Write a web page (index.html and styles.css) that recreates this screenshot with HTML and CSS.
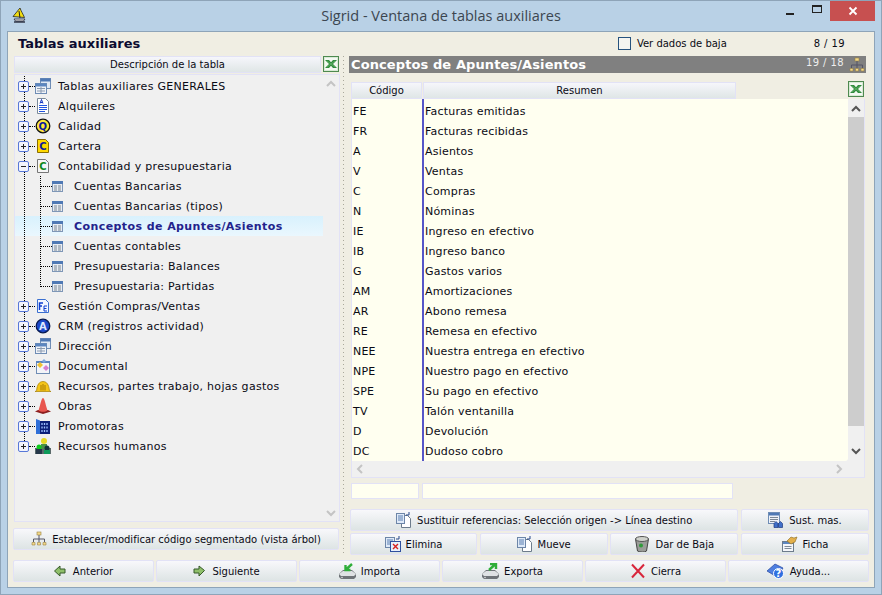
FILE: index.html
```html
<!DOCTYPE html>
<html lang="es">
<head>
<meta charset="utf-8">
<title>Sigrid - Ventana de tablas auxiliares</title>
<link rel="stylesheet" href="styles.css">
</head>
<body>
<svg class="defs" width="0" height="0" aria-hidden="true">
  <symbol id="i-excel" viewBox="0 0 16 16"><rect width="16" height="16" fill="#4e8a50"/><rect x="1" y="1" width="14" height="14" fill="#d9ead6"/><rect x="2" y="2" width="12" height="12" fill="#f4f9f2"/><path d="M2 4h4l2 2.200L10 4h4l-4 4 4 4h-4L8 9.800 6 12H2l4-4z" fill="#2f8a3c"/><path d="M4 5l8 6M12 5l-8 6" stroke="#6dbb70" stroke-width=".7"/></symbol>
  <symbol id="i-tables" viewBox="0 0 16 16"><rect x="5.500" y=".5" width="10" height="10" fill="#dfe8f4" stroke="#6f8db5"/><rect x="5.500" y=".5" width="10" height="3" fill="#4f79b5"/><rect x=".5" y="5.500" width="11" height="10" fill="#f0f3f8" stroke="#6f8db5"/><rect x=".5" y="5.500" width="11" height="3" fill="#5c86c0"/><path d="M2 10.500h8M2 13h8M6 9v6" stroke="#8a9ab0"/></symbol>
  <symbol id="i-docA" viewBox="0 0 16 16"><path d="M2.500.5h8l3 3v12h-11z" fill="#fff" stroke="#7a8a9a"/><path d="M5 5.500l1.500-4 1.500 4M5.500 4.500h2" stroke="#1033c0" fill="none"/><path d="M4 7.500h8M4 9.500h8M4 11.500h8M4 13.500h6" stroke="#2255e0"/></symbol>
  <symbol id="i-sub" viewBox="0 0 11 11"><rect x=".5" y=".5" width="10" height="10" fill="#e8ecf2" stroke="#7f97b7"/><rect x="0" y="0" width="11" height="3" fill="#4f79b5"/><path d="M2 5h3M6 5h3M2 7h3M6 7h3M2 9h3M6 9h3" stroke="#7b8794"/></symbol>
  <symbol id="i-fe" viewBox="0 0 16 16"><path d="M2.500 1.500h8l3 3v10h-11z" fill="#f4f8ff" stroke="#3a6fd0"/><path d="M4.500 12V5H8M4.500 8H7" stroke="#0f3fd0" stroke-width="1.500" fill="none"/><path d="M9 13V8h3M9 10.500h2.500M9 13h3" stroke="#0f3fd0" fill="none"/></symbol>
  <symbol id="i-doc" viewBox="0 0 16 16"><rect x="1.500" y="3.500" width="13" height="12" fill="#f2f4f8" stroke="#6f8db5"/><rect x="1" y="3" width="14" height="2" fill="#5c86c0"/><path d="M5 4l3 3-3 3-3-3z" fill="#f1c232"/><path d="M11 7l3 3-3 3-3-3z" fill="#d77fd0"/><path d="M9 1l2 2-2 2-2-2z" fill="#7aa7e0"/></symbol>
  <symbol id="i-helmet" viewBox="0 0 16 16"><path d="M0 13.500c.8-.3 1.200-.5 1.600-.8C2 6.500 4.500 3.500 8 3.500s6 3 6.400 9.200c.4.300.8.500 1.600.8z" fill="#f5c518" stroke="#a67f00" stroke-width=".7"/><path d="M6 7v5.500M8 6v6.500M10 7v5.500" stroke="#a87b00"/></symbol>
  <symbol id="i-cone" viewBox="0 0 16 16"><path d="M0 13.500l3-1.500h10l3 1.500-8 2.500z" fill="#8c1f1f"/><path d="M8 0c1.500 0 2.200 5 4.500 12.500-2.500 1.800-6.500 1.800-9 0C5.800 5 6.500 0 8 0z" fill="#e8554e"/></symbol>
  <symbol id="i-build" viewBox="0 0 16 16"><path d="M1 1l4 1.500V16H1z" fill="#2f6fd8"/><rect x="5" y="3" width="10" height="13" fill="#0b1f78"/><path d="M7 5v2M9.500 5v2M12 5v2M7 8.500v2M9.500 8.500v2M12 8.500v2M7 12v2M9.500 12v2M12 12v2" stroke="#9fc0ff" stroke-width="1.300"/></symbol>
  <symbol id="i-people" viewBox="0 0 16 16"><rect y="10" width="16" height="6" fill="#5a6a6a"/><circle cx="9" cy="3" r="3" fill="#e5d923"/><rect x="6" y="6" width="6" height="5" fill="#4a8f4a"/><circle cx="4" cy="9" r="2.500" fill="#0ecb1e"/><circle cx="12" cy="10" r="2.500" fill="#14303a"/><rect x="1" y="11" width="6" height="5" fill="#26384a"/><rect x="9" y="12" width="6" height="4" fill="#0e9a5a"/></symbol>
  <symbol id="i-tree" viewBox="0 0 16 16"><rect x="6" y="1" width="4" height="3" fill="#f3d98a" stroke="#9a8240" stroke-width=".6"/><path d="M8 4v4M2.500 11V8h11v3M8 8v3" stroke="#556" fill="none"/><path d="M1 11.500h3v2.500H1zM6.500 11.500h3v2.500h-3zM12 11.500h3v2.500h-3z" fill="#f3d98a" stroke="#9a8240" stroke-width=".6"/></symbol>
  <symbol id="i-left" viewBox="0 0 12 12"><path d="M6 1v3h5v4H6v3L.5 6z" fill="#8fc06a" stroke="#375a2a"/></symbol>
  <symbol id="i-right" viewBox="0 0 12 12"><path d="M6 1v3H1v4h5v3l5.500-5.500z" fill="#8fc06a" stroke="#375a2a"/></symbol>
  <symbol id="i-import" viewBox="0 0 17 16"><path d="M0 11l4-4h9l4 4v3l-2 2H2l-2-2z" fill="#6f7478"/><path d="M0 11l4-3h9l4 3-2 2H2z" fill="#dfe2e4"/><circle cx="3" cy="14.500" r=".8" fill="#ddd"/><path d="M13 1L7 6.500M6.500 2v5h5" stroke="#2fae3a" stroke-width="2.400" fill="none"/></symbol>
  <symbol id="i-export" viewBox="0 0 17 16"><path d="M0 11l4-4h9l4 4v3l-2 2H2l-2-2z" fill="#6f7478"/><path d="M0 11l4-3h9l4 3-2 2H2z" fill="#dfe2e4"/><circle cx="3" cy="14.500" r=".8" fill="#ddd"/><path d="M7 7l6-5.500M8 1h6v5" stroke="#2fae3a" stroke-width="2.400" fill="none"/></symbol>
  <symbol id="i-x" viewBox="0 0 16 16"><path d="M2 1.500l12 13M14 1.500l-12 13" stroke="#d8263c" stroke-width="2" fill="none"/></symbol>
  <symbol id="i-move" viewBox="0 0 16 16"><path d="M5.500 3.500h6l3 3v9h-9z" fill="#fff" stroke="#6d7c8c"/><rect x=".5" y="1.500" width="8" height="10" fill="#dfeaf8" stroke="#6d86a8"/><path d="M2 4h5M2 6h5M2 8h5" stroke="#5a7fb0"/><path d="M10 3h3V0" stroke="#27488a" fill="none"/></symbol>
  <symbol id="i-del" viewBox="0 0 16 16"><rect x=".5" y="1.500" width="9" height="10" fill="#dfeaf8" stroke="#6d86a8"/><path d="M2 4h6M2 6h6M2 8h6" stroke="#5a7fb0"/><rect x="5.500" y="5.500" width="10" height="10" fill="#e8f0fb" stroke="#3050a0"/><path d="M8 8l5 5M13 8l-5 5" stroke="#d82020" stroke-width="1.400"/><path d="M11 3h3V0" stroke="#27488a" fill="none"/></symbol>
  <symbol id="i-trash" viewBox="0 0 16 16"><path d="M1.500 3l2 12c3 1.500 7 1.500 9 0l2-12z" fill="#9a9c98" stroke="#444"/><ellipse cx="8" cy="3" rx="6.500" ry="2.500" fill="#d0d2cc" stroke="#555"/><circle cx="7" cy="9.500" r="2" fill="#2f9a3a"/></symbol>
  <symbol id="i-ficha" viewBox="0 0 16 16"><rect x=".5" y="5.500" width="11" height="10" fill="#f4f6fa" stroke="#6d7c8c"/><rect x="1" y="6" width="10" height="2" fill="#5c86c0"/><path d="M2.500 10.500h7M2.500 12.500h7" stroke="#7f8b99"/><path d="M5 5l4-4 3 1 3-1-2 5-4 2z" fill="#e3b04b" stroke="#8a6a20" stroke-width=".6"/></symbol>
  <symbol id="i-sust" viewBox="0 0 16 16"><rect x=".5" y=".5" width="11" height="11" fill="#eef2f8" stroke="#6f8db5"/><rect x="1" y="1" width="10" height="2.500" fill="#4f79b5"/><path d="M2 5.500h8M2 7.500h8M2 9.500h5" stroke="#7b8794"/><path d="M6 15.500v-4l2-2 2 2v4zM10.500 15.500v-4l2-2 2 2v4z" fill="#3f6fc8" stroke="#1c3a80" stroke-width=".7"/></symbol>
</svg>

<div class="window">
  <header class="titlebar">
    <svg class="appicon" width="15" height="16" viewBox="0 0 15 16"><path d="M1 9.500L8 1c1 3 3 6 4.500 9.500z" fill="#f2dd10" stroke="#222" stroke-width=".8"/><path d="M7 4l1 7" stroke="#222"/><path d="M2 12h11l-1.500 2h-8z" fill="#f4f4f4" stroke="#223" stroke-width=".8"/><path d="M2 15h11" stroke="#112" stroke-width="1.200"/></svg>
    <span class="title">Sigrid - Ventana de tablas auxiliares</span>
    <div class="controls">
      <span class="ctl ctl-min"><span class="min-bar"></span></span>
      <span class="ctl ctl-max"><span class="max-box"></span></span>
      <span class="ctl ctl-close"><svg width="10" height="10" viewBox="0 0 10 10"><path d="M1.500 1.500l7 7M8.500 1.500l-7 7" stroke="#fff" stroke-width="1.800"/></svg></span>
    </div>
  </header>

  <div class="content">
    <div class="toprow">
      <h1 class="heading">Tablas auxiliares</h1>
      <label class="check"><span class="box"></span>Ver dados de baja</label>
      <span class="counter">8 / 19</span>
    </div>

    <div class="main">
      <section class="left">
        <div class="headrow">
          <div class="colhead grow">Descripción de la tabla</div>
          <svg class="xls" width="16" height="16"><use href="#i-excel"/></svg>
        </div>
        <div class="tree">
          <div class="nodes">
            <div class="node"><span class="exp"></span><span class="twig"></span><svg class="nic" width="16" height="16"><use href="#i-tables"/></svg><span>Tablas auxiliares GENERALES</span></div>
            <div class="node"><span class="exp"></span><span class="twig"></span><svg class="nic" width="16" height="16"><use href="#i-docA"/></svg><span>Alquileres</span></div>
            <div class="node"><span class="exp"></span><span class="twig"></span><svg class="nic" width="16" height="16" viewBox="0 0 16 16"><circle cx="8" cy="8" r="6.800" fill="#fde93a" stroke="#111" stroke-width="1.300"/><text x="8" y="11.500" class="ic-t" fill="#0b1a9a">Q</text></svg><span>Calidad</span></div>
            <div class="node"><span class="exp"></span><span class="twig"></span><svg class="nic" width="16" height="16" viewBox="0 0 16 16"><path d="M2.500 1.500h8l3 3v10h-11z" fill="#ffd900" stroke="#8a6d00"/><text x="8" y="12" class="ic-t" fill="#10209a">C</text></svg><span>Cartera</span></div>
            <div class="node"><span class="exp exp-open"></span><span class="twig"></span><svg class="nic" width="16" height="16" viewBox="0 0 16 16"><path d="M2.500 1.500h8l3 3v10h-11z" fill="#f6f6f6" stroke="#777"/><text x="8" y="12" class="ic-t" fill="#0f8a1a">C</text></svg><span>Contabilidad y presupuestaria</span></div>
            <div class="node sub"><span class="twig-sub"></span><svg class="sic" width="11" height="11"><use href="#i-sub"/></svg><span>Cuentas Bancarias</span></div>
            <div class="node sub"><span class="twig-sub"></span><svg class="sic" width="11" height="11"><use href="#i-sub"/></svg><span>Cuentas Bancarias (tipos)</span></div>
            <div class="node sub selected"><span class="twig-sub"></span><svg class="sic" width="11" height="11"><use href="#i-sub"/></svg><span>Conceptos de Apuntes/Asientos</span></div>
            <div class="node sub"><span class="twig-sub"></span><svg class="sic" width="11" height="11"><use href="#i-sub"/></svg><span>Cuentas contables</span></div>
            <div class="node sub"><span class="twig-sub"></span><svg class="sic" width="11" height="11"><use href="#i-sub"/></svg><span>Presupuestaria: Balances</span></div>
            <div class="node sub sub-last"><span class="twig-sub"></span><svg class="sic" width="11" height="11"><use href="#i-sub"/></svg><span>Presupuestaria: Partidas</span></div>
            <div class="node"><span class="exp"></span><span class="twig"></span><svg class="nic" width="16" height="16"><use href="#i-fe"/></svg><span>Gestión Compras/Ventas</span></div>
            <div class="node"><span class="exp"></span><span class="twig"></span><svg class="nic" width="16" height="16" viewBox="0 0 16 16"><circle cx="8" cy="8" r="6.800" fill="#1c48c8" stroke="#081a50" stroke-width="1.300"/><text x="8" y="11.500" class="ic-t" fill="#dfe8ff">A</text></svg><span>CRM (registros actividad)</span></div>
            <div class="node"><span class="exp"></span><span class="twig"></span><svg class="nic" width="16" height="16"><use href="#i-tables"/></svg><span>Dirección</span></div>
            <div class="node"><span class="exp"></span><span class="twig"></span><svg class="nic" width="16" height="16"><use href="#i-doc"/></svg><span>Documental</span></div>
            <div class="node"><span class="exp"></span><span class="twig"></span><svg class="nic" width="16" height="16"><use href="#i-helmet"/></svg><span>Recursos, partes trabajo, hojas gastos</span></div>
            <div class="node"><span class="exp"></span><span class="twig"></span><svg class="nic" width="16" height="16"><use href="#i-cone"/></svg><span>Obras</span></div>
            <div class="node"><span class="exp"></span><span class="twig"></span><svg class="nic" width="16" height="16"><use href="#i-build"/></svg><span>Promotoras</span></div>
            <div class="node node-last"><span class="exp"></span><span class="twig"></span><svg class="nic" width="16" height="16"><use href="#i-people"/></svg><span>Recursos humanos</span></div>
          </div>
          <div class="vbar vbar-idle">
            <svg width="16" height="16" viewBox="0 0 16 16"><path d="M4 10l4-4 4 4" class="chev"/></svg>
            <svg width="16" height="16" viewBox="0 0 16 16"><path d="M4 6l4 4 4-4" class="chev"/></svg>
          </div>
        </div>
        <button class="btn seg"><svg width="16" height="16"><use href="#i-tree"/></svg>Establecer/modificar código segmentado (vista árbol)</button>
      </section>

      <div class="splitter"></div>

      <section class="right">
        <div class="panelbar">
          <span class="paneltitle">Conceptos de Apuntes/Asientos</span>
          <span class="panelcount">19 / 18</span>
          <svg width="16" height="16"><use href="#i-tree"/></svg>
        </div>
        <div class="headrow gridhead">
          <div class="colhead col-code">Código</div>
          <div class="colhead col-res">Resumen</div>
          <svg class="xls xls-right" width="16" height="16"><use href="#i-excel"/></svg>
        </div>
        <div class="grid">
          <div class="gridmain">
            <div class="rows">
              <div class="row"><span class="code">FE</span><span class="res">Facturas emitidas</span></div>
              <div class="row"><span class="code">FR</span><span class="res">Facturas recibidas</span></div>
              <div class="row"><span class="code">A</span><span class="res">Asientos</span></div>
              <div class="row"><span class="code">V</span><span class="res">Ventas</span></div>
              <div class="row"><span class="code">C</span><span class="res">Compras</span></div>
              <div class="row"><span class="code">N</span><span class="res">Nóminas</span></div>
              <div class="row"><span class="code">IE</span><span class="res">Ingreso en efectivo</span></div>
              <div class="row"><span class="code">IB</span><span class="res">Ingreso banco</span></div>
              <div class="row"><span class="code">G</span><span class="res">Gastos varios</span></div>
              <div class="row"><span class="code">AM</span><span class="res">Amortizaciones</span></div>
              <div class="row"><span class="code">AR</span><span class="res">Abono remesa</span></div>
              <div class="row"><span class="code">RE</span><span class="res">Remesa en efectivo</span></div>
              <div class="row"><span class="code">NEE</span><span class="res">Nuestra entrega en efectivo</span></div>
              <div class="row"><span class="code">NPE</span><span class="res">Nuestro pago en efectivo</span></div>
              <div class="row"><span class="code">SPE</span><span class="res">Su pago en efectivo</span></div>
              <div class="row"><span class="code">TV</span><span class="res">Talón ventanilla</span></div>
              <div class="row"><span class="code">D</span><span class="res">Devolución</span></div>
              <div class="row"><span class="code">DC</span><span class="res">Dudoso cobro</span></div>
            </div>
            <div class="vbar vbar-live">
              <svg class="up" width="16" height="16" viewBox="0 0 16 16"><path d="M4 10l4-4 4 4" class="chev-dark"/></svg>
              <div class="thumb"></div>
              <svg class="down" width="16" height="16" viewBox="0 0 16 16"><path d="M4 6l4 4 4-4" class="chev-dark"/></svg>
            </div>
          </div>
          <div class="hbar">
            <svg width="16" height="16" viewBox="0 0 16 16"><path d="M10 4L6 8l4 4" class="chev"/></svg>
            <svg width="16" height="16" viewBox="0 0 16 16"><path d="M6 4l4 4-4 4" class="chev"/></svg>
          </div>
        </div>
        <div class="filters">
          <div class="field f-code"></div>
          <div class="field f-res"></div>
        </div>
        <div class="actions">
          <button class="btn a-wide"><svg width="16" height="16"><use href="#i-move"/></svg>Sustituir referencias: Selección origen -&gt; Línea destino</button>
          <button class="btn"><svg width="16" height="16"><use href="#i-sust"/></svg>Sust. mas.</button>
          <button class="btn"><svg width="16" height="16"><use href="#i-del"/></svg>Elimina</button>
          <button class="btn"><svg width="16" height="16"><use href="#i-move"/></svg>Mueve</button>
          <button class="btn"><svg width="16" height="16"><use href="#i-trash"/></svg>Dar de Baja</button>
          <button class="btn"><svg width="16" height="16"><use href="#i-ficha"/></svg>Ficha</button>
        </div>
      </section>
    </div>

    <div class="bottombar">
      <button class="btn g7"><svg width="12" height="12"><use href="#i-left"/></svg>Anterior</button>
      <button class="btn g7"><svg width="12" height="12"><use href="#i-right"/></svg>Siguiente</button>
      <button class="btn"><svg width="17" height="16"><use href="#i-import"/></svg>Importa</button>
      <button class="btn"><svg width="17" height="16"><use href="#i-export"/></svg>Exporta</button>
      <button class="btn"><svg width="16" height="16"><use href="#i-x"/></svg>Cierra</button>
      <button class="btn"><svg width="18" height="16" viewBox="0 0 18 16"><path d="M0 8l8-7 8 4-6 9z" fill="#4f7fe0" stroke="#23439c" stroke-width=".7"/><circle cx="11.500" cy="10.500" r="5" fill="#2f6fe0" stroke="#fff"/><text x="11.500" y="14" class="ic-t" fill="#fff">?</text></svg>Ayuda...</button>
    </div>
  </div>
</div>
</body>
</html>
```

FILE: styles.css
```css
* { box-sizing: border-box; }
html, body { margin: 0; height: 100%; }
body { font-family: "DejaVu Sans", Verdana, sans-serif; font-size: 11px; color: #0a0a14; overflow: hidden; }
.defs { display: block; height: 0; }
.ic-t { font: bold 10px "DejaVu Sans", sans-serif; text-anchor: middle; }

.window { width: 882px; height: 595px; background: #b9d1e6; border: 1px solid #8ea4b8; display: flex; flex-direction: column; }
.titlebar { height: 30px; flex: none; display: flex; align-items: flex-start; padding-left: 11px; }
.appicon { margin-top: 6px; }
.title { flex: 1; text-align: center; font: 14.500px/1 "Open Sans", sans-serif; color: #3c4650; padding-top: 8px; padding-left: 78px; }
.controls { display: flex; align-items: flex-start; margin-right: 6px; }
.ctl { display: flex; align-items: center; justify-content: center; height: 20px; }
.ctl-min { width: 26px; }
.min-bar { width: 8px; height: 2px; background: #222; margin-top: 6px; }
.ctl-max { width: 27px; }
.max-box { width: 10px; height: 8px; border: 1px solid #222; border-top-width: 2px; margin-top: -5px; }
.ctl-close { width: 45px; background: #c75050; }

.content { flex: 1; margin: 0 6px 6px; background: #f0eee3; border: 1px solid #8ea4b8; padding: 0 5px; display: flex; flex-direction: column; }

.toprow { height: 24px; flex: none; display: flex; align-items: center; font-size: 10px; padding-bottom: 2px; }
.heading { margin: 0 0 0 5px; flex: 1; font-size: 13px; font-weight: bold; color: #0b0b30; }
.check { display: flex; align-items: center; gap: 6px; margin-right: 87px; }
.box { width: 13px; height: 13px; border: 1px solid #26527e; background: #f4f4f0; }
.counter { margin-right: 24px; letter-spacing: .4px; }

.main { flex: none; height: 498px; display: grid; grid-template-columns: 327px 10px 519px; }
.left { display: flex; flex-direction: column; }
.headrow { display: flex; }
.colhead { height: 17px; background: linear-gradient(#f6f6fb, #dfe6e6); border: 1px solid #e2e2f6; text-align: center; font-size: 10px; line-height: 15px; }
.grow { flex: 1; margin-left: 1px; }
.xls { flex: none; margin-left: 2px; margin-right: 1px; }

.tree { height: 448px; margin: 1px 0 0 1px; display: flex; background: #f0f0f0; border: 1px solid #e2e2f6; letter-spacing: .3px; }
.nodes { flex: 1; padding-top: 1px; }
.node {
  height: 20px; display: flex; align-items: center; padding-left: 3px;
  background: repeating-linear-gradient(#000 0 1px, transparent 1px 2px) 9px 0 / 1px 100% no-repeat;
}
.node-last { background-size: 1px 50%; }
.sub {
  padding-left: 25px;
  background:
    repeating-linear-gradient(#000 0 1px, transparent 1px 2px) 9px 0 / 1px 100% no-repeat,
    repeating-linear-gradient(#000 0 1px, transparent 1px 2px) 25px 0 / 1px 100% no-repeat;
}
.sub-last {
  background:
    repeating-linear-gradient(#000 0 1px, transparent 1px 2px) 9px 0 / 1px 100% no-repeat,
    repeating-linear-gradient(#000 0 1px, transparent 1px 2px) 25px 0 / 1px 50% no-repeat;
}
.selected {
  font-weight: bold; color: #23238c; letter-spacing: .42px;
  background:
    repeating-linear-gradient(#000 0 1px, transparent 1px 2px) 9px 0 / 1px 100% no-repeat,
    repeating-linear-gradient(#000 0 1px, transparent 1px 2px) 25px 0 / 1px 100% no-repeat,
    linear-gradient(#d8f1fd, #eaf7fe);
}
.exp {
  width: 11px; height: 11px; flex: none; border: 1px solid #5878d8; border-radius: 2px;
  background:
    linear-gradient(#222, #222) center / 5px 1px no-repeat,
    linear-gradient(#222, #222) center / 1px 5px no-repeat,
    #f2f4fc;
}
.exp-open {
  background:
    linear-gradient(#222, #222) center / 5px 1px no-repeat,
    #f2f4fc;
}
.twig { width: 6px; flex: none; border-top: 1px dotted #000; }
.twig-sub { width: 12px; flex: none; border-top: 1px dotted #000; }
.nic { flex: none; margin-right: 7px; }
.sic { flex: none; margin-right: 11px; }

.vbar { width: 16px; flex: none; display: flex; flex-direction: column; background: #f0f0f0; }
.vbar-idle { justify-content: space-between; padding: 1px 0 0; }
.chev { fill: none; stroke: #c4c4c4; stroke-width: 2; }
.chev-dark { fill: none; stroke: #555; stroke-width: 2; }

.btn { display: flex; align-items: center; justify-content: center; gap: 5px; height: 22px; padding: 0; background: linear-gradient(#f8f8fb, #dde4e4); border: 1px solid #e2e2f6; border-radius: 2px; font: 10px "DejaVu Sans", Verdana, sans-serif; color: #0a0a14; }
.g7 { gap: 7px; }
.seg { margin-top: 6px; margin-right: 1px; }

.splitter { background: repeating-linear-gradient(#aaa99c 0 1px, transparent 1px 4px) 3px 0 / 1px 100% no-repeat; }

.right { display: flex; flex-direction: column; }
.panelbar { height: 17px; margin: 0 3px 0 -1px; padding: 0 1px 0 2px; background: #808080; display: flex; align-items: center; color: #fff; }
.paneltitle { flex: 1; font-size: 13px; font-weight: bold; letter-spacing: .1px; }
.panelcount { font-size: 10px; letter-spacing: .4px; margin-right: 5px; margin-bottom: 4px; color: #eee; }
.gridhead { margin: 9px 0 0 1px; height: 17px; }
.col-code { width: 71px; flex: none; }
.col-res { width: 313px; flex: none; margin-left: 1px; }
.xls-right { margin: -1px 0 0 112px; }

.grid { width: 514px; height: 379px; margin: 0 0 0 1px; background: #f0f0f0; border: 1px solid #e2e2f6; border-top: 0; display: flex; flex-direction: column; letter-spacing: .2px; }
.gridmain { height: 362px; display: flex; background: #f0f0f0; }
.rows { flex: 1; padding-top: 2px; overflow: hidden; background: #fffff0; border-bottom-right-radius: 3px; }
.row { height: 20px; display: flex; align-items: center; }
.code { width: 70px; flex: none; padding-left: 1px; }
.res { flex: 1; height: 20px; line-height: 21px; border-left: 2px solid #5656c8; padding-left: 1px; }
.rows .row:first-child .res { margin-top: -2px; height: 22px; line-height: 25px; }
.vbar-live .up { margin: 2px 0 0; }
.thumb { width: 16px; height: 309px; background: #cdcdcd; }
.vbar-live .down { margin-top: auto; margin-bottom: 2px; }
.hbar { height: 16px; display: flex; justify-content: space-between; padding: 0 17px 0 0; }

.filters { display: flex; gap: 3px; margin: 5px 0 0 1px; }
.field { height: 16px; background: #fffff0; border: 1px solid #e2e2f6; }
.f-code { width: 68px; }
.f-res { width: 311px; }

.actions { margin-top: 10px; display: grid; grid-template-columns: 127px 128px 128px 128px; column-gap: 2.670px; row-gap: 2px; }
.a-wide { grid-column: span 3; }

.bottombar { margin-top: 6px; display: grid; grid-template-columns: repeat(6, 141px); column-gap: 2px; }
```
